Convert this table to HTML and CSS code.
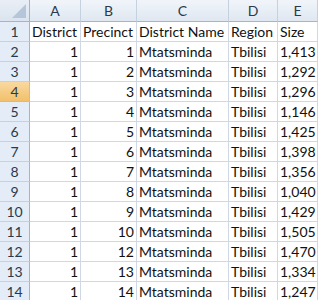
FILE: index.html
```html
<!DOCTYPE html>
<html>
<head>
<meta charset="utf-8">
<link rel="stylesheet" href="styles.css">
</head>
<body>
<div class="sheet">
  <div class="corner"><span class="tri"></span></div>
  <div class="ch">A</div><div class="ch">B</div><div class="ch">C</div><div class="ch">D</div><div class="ch">E</div>

  <div class="rh">1</div><div class="c">District</div><div class="c">Precinct</div><div class="c">District Name</div><div class="c">Region</div><div class="c">Size</div>
  <div class="rh">2</div><div class="c n">1</div><div class="c n">1</div><div class="c">Mtatsminda</div><div class="c">Tbilisi</div><div class="c n">1,413</div>
  <div class="rh">3</div><div class="c n">1</div><div class="c n">2</div><div class="c">Mtatsminda</div><div class="c">Tbilisi</div><div class="c n">1,292</div>
  <div class="rh sel">4</div><div class="c n">1</div><div class="c n">3</div><div class="c">Mtatsminda</div><div class="c">Tbilisi</div><div class="c n">1,296</div>
  <div class="rh">5</div><div class="c n">1</div><div class="c n">4</div><div class="c">Mtatsminda</div><div class="c">Tbilisi</div><div class="c n">1,146</div>
  <div class="rh">6</div><div class="c n">1</div><div class="c n">5</div><div class="c">Mtatsminda</div><div class="c">Tbilisi</div><div class="c n">1,425</div>
  <div class="rh">7</div><div class="c n">1</div><div class="c n">6</div><div class="c">Mtatsminda</div><div class="c">Tbilisi</div><div class="c n">1,398</div>
  <div class="rh">8</div><div class="c n">1</div><div class="c n">7</div><div class="c">Mtatsminda</div><div class="c">Tbilisi</div><div class="c n">1,356</div>
  <div class="rh">9</div><div class="c n">1</div><div class="c n">8</div><div class="c">Mtatsminda</div><div class="c">Tbilisi</div><div class="c n">1,040</div>
  <div class="rh">10</div><div class="c n">1</div><div class="c n">9</div><div class="c">Mtatsminda</div><div class="c">Tbilisi</div><div class="c n">1,429</div>
  <div class="rh">11</div><div class="c n">1</div><div class="c n">10</div><div class="c">Mtatsminda</div><div class="c">Tbilisi</div><div class="c n">1,505</div>
  <div class="rh">12</div><div class="c n">1</div><div class="c n">12</div><div class="c">Mtatsminda</div><div class="c">Tbilisi</div><div class="c n">1,470</div>
  <div class="rh">13</div><div class="c n">1</div><div class="c n">13</div><div class="c">Mtatsminda</div><div class="c">Tbilisi</div><div class="c n">1,334</div>
  <div class="rh">14</div><div class="c n">1</div><div class="c n">14</div><div class="c">Mtatsminda</div><div class="c">Tbilisi</div><div class="c n">1,247</div>
</div>
</body>
</html>
```
FILE: styles.css
```css
html, body {
  margin: 0;
  padding: 0;
  background: #ffffff;
  overflow: hidden;
}
.sheet {
  display: grid;
  grid-template-columns: 30px 51px 56px 92px 49px 40px;
  grid-template-rows: 22px repeat(14, 20px);
  width: 318px;
  font-family: Lato, "Open Sans", sans-serif;
  font-size: 14px;
  color: #111;
}
.sheet > div {
  box-sizing: border-box;
  border-right: 1px solid #d0d7e5;
  border-bottom: 1px solid #d0d7e5;
  white-space: nowrap;
  overflow: hidden;
  line-height: 19px;
}
.sheet > .corner {
  position: relative;
  background: linear-gradient(#e9eef6, #dbe4ef);
  border-right: 1px solid #9eb6ce;
  border-bottom: 1px solid #9eb6ce;
}
.tri {
  position: absolute;
  right: 3px;
  bottom: 3px;
  width: 0;
  height: 0;
  border-left: 14px solid transparent;
  border-bottom: 14px solid #b6c6da;
}
.sheet > .ch {
  background: linear-gradient(#f1f5fa, #dfe7f1);
  border-right: 1px solid #c5d1df;
  border-bottom: 1px solid #9eb6ce;
  text-align: center;
  line-height: 21px;
  color: #2a3a4d;
}
.sheet > .rh {
  background: #e4ecf7;
  border-right: 1px solid #9eb6ce;
  border-bottom: 1px solid #c5d1df;
  text-align: center;
  color: #2a3a4d;
}
.sheet > .rh.sel {
  background: linear-gradient(#f9d9a1, #f2c06a);
  border-bottom: 1px solid #f2b850;
  border-right: 1px solid #f2b850;
}
.c {
  padding: 0 2px;
}
.n {
  text-align: right;
}
```
